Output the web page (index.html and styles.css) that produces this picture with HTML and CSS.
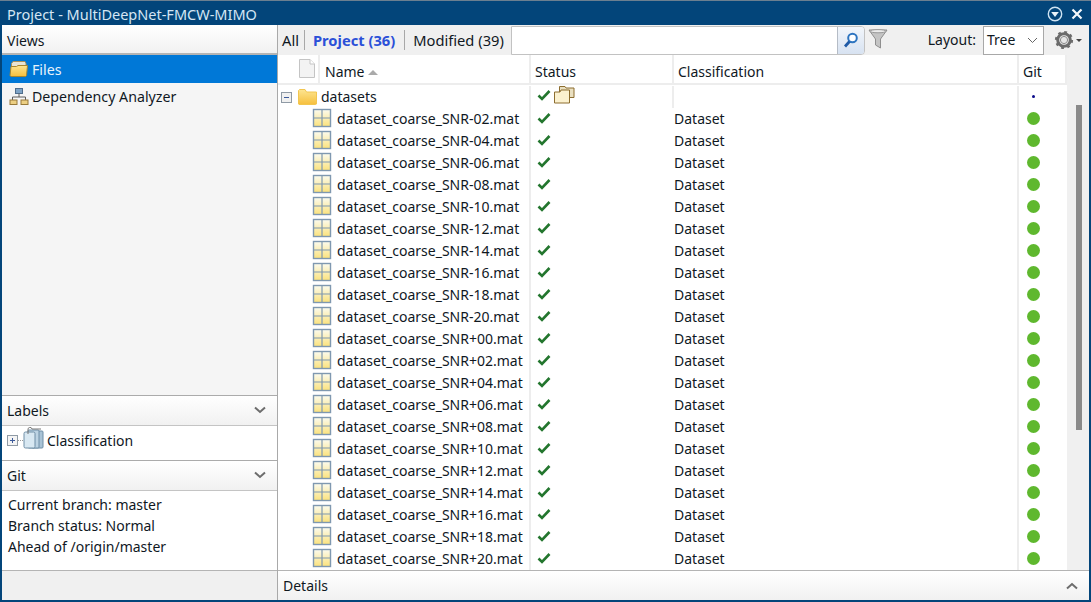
FILE: index.html
```html
<!DOCTYPE html>
<html lang="en">
<head>
<meta charset="utf-8">
<title>Project - MultiDeepNet-FMCW-MIMO</title>
<link rel="stylesheet" href="styles.css">
</head>
<body>
<svg class="defs" width="0" height="0" aria-hidden="true">
  <defs>
    <linearGradient id="cellfill" x1="0" y1="0" x2="0" y2="1"><stop offset="0" stop-color="#fbfbf0"/><stop offset="1" stop-color="#fbe27c"/></linearGradient>
    <linearGradient id="foldfill" x1="0" y1="0" x2="0" y2="1"><stop offset="0" stop-color="#fde591"/><stop offset="1" stop-color="#f6bf3d"/></linearGradient>
    <symbol id="mat" viewBox="0 0 20 20">
      <rect x="1.5" y="1.5" width="17" height="17" fill="url(#cellfill)" stroke="#7f98b0" stroke-width="1.4"/>
      <path d="M10 1.5V18.5M1.5 10H18.5" stroke="#7f98b0" stroke-width="1.2" fill="none"/>
    </symbol>
    <symbol id="check" viewBox="0 0 14 12">
      <path d="M1.5 6.5 5 10 12.5 2" fill="none" stroke="#23762e" stroke-width="2.6"/>
    </symbol>
  </defs>
</svg>
<div class="window">
  <header class="titlebar">
    <span class="title">Project - MultiDeepNet-FMCW-MIMO</span>
    <span class="winbtns">
      <svg width="16" height="16" viewBox="0 0 16 16"><circle cx="8" cy="8" r="6.7" fill="none" stroke="#cfe3f2" stroke-width="1.4"/><path d="M4.2 6H11.8L8 11Z" fill="#eaf4fb"/></svg>
      <svg width="12" height="12" viewBox="0 0 12 12"><path d="M1.5 1.5 10.5 10.5M10.5 1.5 1.5 10.5" stroke="#f4f8fb" stroke-width="2.2"/></svg>
    </span>
  </header>
  <div class="main">
    <aside class="side">
      <div class="panel-head views-head">Views</div>
      <nav class="views">
        <div class="view active">
          <svg width="20" height="18" viewBox="0 0 20 18"><path d="M2.5 3.5 4 1.5H16L17 3.5V8H2.5Z" fill="#e8e4d4" stroke="#a8915a"/><path d="M1 15.5 2 6.5H7.5L9 5.5H18.5L17.5 15.5 16.500 16.500H2Z" fill="url(#foldfill)" stroke="#a8862f"/></svg>
          <span>Files</span>
        </div>
        <div class="view">
          <svg width="20" height="19" viewBox="0 0 20 19"><rect x="6.500" y="1.500" width="7" height="5" fill="#7ea3c6" stroke="#4f6d8c"/><path d="M10 6.500V10M3.500 13V10H16.500V13" fill="none" stroke="#5c5c5c"/><rect x="1" y="13" width="7" height="4.500" fill="#eccf83" stroke="#97793a"/><rect x="12" y="13" width="7" height="4.500" fill="#eccf83" stroke="#97793a"/></svg>
          <span>Dependency Analyzer</span>
        </div>
      </nav>
      <div class="panel-head collapsible"><span>Labels</span><svg class="chev" width="12" height="8" viewBox="0 0 12 8"><path d="M1 1.500 6 6 11 1.500" fill="none" stroke="#6d6d6d" stroke-width="2"/></svg></div>
      <div class="labels">
        <span class="plus"></span><span class="dots"></span>
        <svg width="21" height="22" viewBox="0 0 21 22"><rect x="9" y="4" width="11" height="17" rx="1" fill="#a9c3d6" stroke="#6f8ea6"/><rect x="5" y="3" width="11" height="18" rx="1" fill="#bcd3e3" stroke="#6f8ea6"/><rect x="1" y="5" width="11" height="16" rx="1.500" fill="#d8e8f2" stroke="#6f8ea6"/><path d="M5 7V3A2 2 0 0 1 9 2H18" fill="none" stroke="#777"/></svg>
        <span>Classification</span>
      </div>
      <div class="panel-head collapsible"><span>Git</span><svg class="chev" width="12" height="8" viewBox="0 0 12 8"><path d="M1 1.500 6 6 11 1.500" fill="none" stroke="#6d6d6d" stroke-width="2"/></svg></div>
      <div class="gitinfo">
        <div>Current branch: master</div>
        <div>Branch status: Normal</div>
        <div>Ahead of /origin/master</div>
      </div>
      <div class="side-foot"></div>
    </aside>
    <section class="content">
      <div class="toolbar">
        <span class="tab first">All</span>
        <span class="tab current">Project (36)</span>
        <span class="tab last">Modified (39)</span>
        <div class="search">
          <input class="search-input" type="text" aria-label="Search">
          <span class="search-btn"><svg width="18" height="18" viewBox="0 0 18 18"><circle cx="10.500" cy="7" r="4.300" fill="#fff" stroke="#2e75c0" stroke-width="2"/><path d="M7.500 10.500 3 15.500" stroke="#1f5aa6" stroke-width="2.800"/></svg></span>
        </div>
        <svg class="funnel" width="20" height="22" viewBox="0 0 20 22"><path d="M1 2H19L12.500 11V20L7.500 17V11Z" fill="#c4c4c4" stroke="#8f8f8f"/><ellipse cx="10" cy="3.200" rx="8" ry="1.600" fill="#ececec" stroke="#999"/></svg>
        <span class="layout-label">Layout:</span>
        <div class="select"><span>Tree</span><svg width="11" height="7" viewBox="0 0 11 7"><path d="M1 1 5.500 5.500 10 1" fill="none" stroke="#666"/></svg></div>
        <svg class="gear" width="20" height="20" viewBox="0 0 20 20"><circle cx="10" cy="10" r="6.300" fill="none" stroke="#6b6b6b" stroke-width="3"/><circle cx="10" cy="10" r="8" fill="none" stroke="#6b6b6b" stroke-width="2.200" stroke-dasharray="2.800 3.480"/><circle cx="10" cy="10" r="3.600" fill="#e6e6e6" stroke="#8a8a8a"/></svg>
        <span class="gear-arrow"></span>
      </div>
      <div class="table-area">
        <div class="table">
          <div class="thead">
            <div class="th c-icon"><svg width="16" height="19" viewBox="0 0 16 19"><path d="M.5.5H11L15.500 5V18.500H.5Z" fill="#f3f3f3" stroke="#c4c4c4"/><path d="M11 .5V5H15.500" fill="#fff" stroke="#c4c4c4"/></svg></div>
            <div class="th c-name">Name<span class="sort"></span></div>
            <div class="th c-status">Status</div>
            <div class="th c-class">Classification</div>
            <div class="th c-git">Git</div>
          </div>
          <div class="tbody" id="rows">
            <div class="row folder">
              <div class="c-tree"><span class="minus"></span>
                <svg width="19" height="16" viewBox="0 0 19 16"><path d="M.5 15V1.500L1.500.5H7L8.500 3H18.500V15L17.500 15.500H1Z" fill="url(#foldfill)" stroke="#f2c651"/></svg>
                <span class="fname">datasets</span></div>
              <div class="c-status cell"><svg class="ck" width="14" height="12"><use href="#check"/></svg>
                <svg class="stack" width="21" height="19" viewBox="0 0 21 19"><path d="M5.500 7V1.500H11L12 3H20V12.500H16" fill="#e9dfc0" stroke="#8c6d2f"/><path d="M.5 18V7H6L7 5H15.500V18Z" fill="#fbf1cf" stroke="#8c6d2f"/></svg></div>
              <div class="c-class cell"></div>
              <div class="c-git cell"><span class="dot"></span></div>
            </div>
          </div>
        </div>
        <div class="scrollbar"><div class="thumb"></div></div>
      </div>
      <div class="details"><span>Details</span><svg width="12" height="8" viewBox="0 0 12 8"><path d="M1 6.500 6 2 11 6.500" fill="none" stroke="#6d6d6d" stroke-width="2"/></svg></div>
    </section>
  </div>
</div>
<template id="row-tpl">
  <div class="row">
    <div class="c-tree file"><svg class="mat" width="20" height="20"><use href="#mat"/></svg><span class="fname"></span></div>
    <div class="c-status cell"><svg class="ck" width="14" height="12"><use href="#check"/></svg></div>
    <div class="c-class cell">Dataset</div>
    <div class="c-git cell"><span class="green"></span></div>
  </div>
</template>
<script src="rows.js"></script>
</body>
</html>
```
FILE: rows.js
```js
var names = ["-02","-04","-06","-08","-10","-12","-14","-16","-18","-20","+00","+02","+04","+06","+08","+10","+12","+14","+16","+18","+20"];
var tpl = document.getElementById("row-tpl");
var rows = document.getElementById("rows");
names.forEach(function (n) {
  var r = tpl.content.cloneNode(true);
  r.querySelector(".fname").textContent = "dataset_coarse_SNR" + n + ".mat";
  rows.appendChild(r);
});
```
FILE: styles.css
```css
* { box-sizing: border-box; }
html, body { margin: 0; padding: 0; height: 100%; overflow: hidden; }
body { font: 14px/20px "Noto Sans", "Open Sans", sans-serif; color: #10181f; background: #03457a; }
.defs { position: absolute; }
.window { width: 1091px; height: 602px; display: flex; flex-direction: column; background: #03457a; padding: 0 2px 2px; border-top: 1px solid #6c7f90; }
.titlebar { height: 24px; flex: none; display: flex; align-items: center; justify-content: space-between; color: #d4e6f4; padding: 1px 0 0 5px; font-size: 14.5px; }
.winbtns { display: flex; align-items: center; gap: 8px; padding-right: 6px; }
.main { flex: 1; display: flex; min-height: 0; background: #f0f0f0; }
.side { width: 276px; flex: none; display: flex; flex-direction: column; border-right: 1px solid #a9a9a9; background: #f5f5f5; }
.panel-head { display: flex; align-items: center; justify-content: space-between; padding: 0 11px 0 5px; background: linear-gradient(#ffffff, #f1f1f1); flex: none; }
.views-head { height: 30px; padding-top: 4px; border-bottom: 2px solid #b4b4b4; }
.views { flex: 1; }
.view { height: 27.500px; display: flex; align-items: center; padding-left: 7px; gap: 2px; font-size: 14.2px; }
.view span { margin-left: 1px; padding-top: 2px; }
.view.active { background: #0078d7; color: #e8f3fb; }
.collapsible { height: 31px; padding-top: 1px; border-top: 1px solid #ababab; border-bottom: 1px solid #c4c4c4; }
.chev { margin-top: -2px; }
.labels { height: 34px; flex: none; background: #fff; display: flex; align-items: flex-start; padding: 4px 0 0 5px; }
.labels > span:last-child { margin-left: 3px; line-height: 22px; }
.labels > svg { margin-top: -3px; }
.plus { width: 11px; height: 11px; margin-top: 5px; flex: none; border: 1px solid #8f9aa5; background: linear-gradient(90deg, transparent 2px, #3c5a9a 2px, #3c5a9a 7px, transparent 7px) center / 100% 1px no-repeat, linear-gradient(transparent 2px, #3c5a9a 2px, #3c5a9a 7px, transparent 7px) center / 1px 100% no-repeat, #f4f4f4; }
.dots { width: 5px; height: 1px; margin-top: 10px; flex: none; border-top: 1px dotted #999; }
.gitinfo { height: 79px; flex: none; background: #fff; padding: 3px 0 0 6px; line-height: 21px; }
.side-foot { height: 30px; flex: none; border-top: 1px solid #b4b4b4; background: #f0f0f0; }
.content { flex: 1; min-width: 0; display: flex; flex-direction: column; }
.toolbar { height: 30px; flex: none; display: flex; align-items: center; background: #f0f0f0; padding-left: 4px; }
.tab { padding: 0 9px 0 8px; height: 20px; border-left: 1px solid #a8a8a8; white-space: nowrap; font-size: 14.7px; }
.tab.first { border-left: 0; padding: 0 5px 0 0; }
.tab.last { padding-right: 7px; }
.tab.current { color: #2b50d8; font-weight: 700; }
.search { width: 354px; height: 29px; margin-left: 0; display: flex; background: #fff; border: 1px solid #c2c2c2; border-radius: 0 4px 4px 0; }
.search-input { flex: 1; min-width: 0; border: 0; outline: 0; background: transparent; }
.search-btn { width: 27px; flex: none; display: flex; align-items: center; justify-content: center; border-left: 1px solid #b5bcc6; border-radius: 0 3px 3px 0; background: linear-gradient(#f2f6fb, #d7e2f1); }
.funnel { margin-left: 3px; flex: none; margin-top: -2px; }
.layout-label { margin-left: auto; white-space: nowrap; }
.select { width: 61px; height: 29px; margin-left: 7px; display: flex; align-items: center; justify-content: space-between; padding: 0 5px 0 3px; background: #fff; border: 1px solid #a8a8a8; }
.gear { margin-left: 10px; flex: none; }
.gear-arrow { width: 0; height: 0; margin: 0 7px 0 2px; border: 3px solid transparent; border-top: 3px solid #444; border-bottom: 0; }
.table-area { flex: 1; min-height: 0; display: flex; background: #fff; }
.table { flex: 1; min-width: 0; overflow: hidden; }
.scrollbar { width: 22px; flex: none; background: #f0f0f0; padding: 50px 0 0 9px; }
.thumb { width: 6px; height: 325px; background: #8a8a8a; }
.thead { height: 30px; display: flex; background: #fff; border-bottom: 2px solid #ededed; }
.th { height: 100%; display: flex; align-items: center; padding: 6px 0 0 4px; border-right: 2px solid #ededed; }
.th.c-icon { width: 42px; justify-content: flex-end; padding-right: 3px; }
.th.c-icon svg { margin-top: -7px; }
.th.c-name { width: 211px; padding-left: 5px; }
.th.c-status { width: 143px; }
.th.c-class { width: 345px; }
.th.c-git { width: 48px; }
.sort { width: 0; height: 0; margin-left: 4px; border: 5px solid transparent; border-top: 0; border-bottom: 5px solid #aaa; }
.tbody { padding-top: 1px; }
.row { height: 22px; display: flex; align-items: center; }
.c-tree { width: 253px; height: 100%; display: flex; align-items: center; flex: none; border-right: 2px solid #ededed; white-space: nowrap; }
.folder .c-tree { padding-left: 3px; }
.file { padding-left: 34px; }
.mat { margin-right: 5px; flex: none; margin-top: -2px; }
.minus { width: 11px; height: 11px; flex: none; margin-right: 6px; border: 1px solid #8f9aa5; background: linear-gradient(#3c5a9a, #3c5a9a) center / 5px 1px no-repeat, #f0f0f0; }
.folder svg { flex: none; }
.folder .fname { margin-left: 4px; }
.cell { height: 100%; display: flex; align-items: center; flex: none; }
.c-status.cell { width: 143px; padding-left: 6px; }
.folder .c-status.cell { border-right: 2px solid #ededed; }
.ck { margin-top: -2px; flex: none; }
.folder .ck { margin-top: -4px; }
.stack { margin: -6px 0 0 3px; flex: none; }
.c-class.cell { width: 345px; border-right: 2px solid #ededed; }
.c-git.cell { width: 48px; justify-content: center; padding-right: 20px; }
.dot { width: 3px; height: 3px; border-radius: 50%; background: #0a0a8a; margin-top: -2px; }
.green { width: 13px; height: 13px; border-radius: 50%; background: #5fb82e; flex: none; margin-top: -2px; }
.details { height: 30px; flex: none; display: flex; align-items: center; justify-content: space-between; padding: 0 11px 0 5px; border-top: 1px solid #b4b4b4; background: linear-gradient(#ffffff, #f1f1f1); }
```
